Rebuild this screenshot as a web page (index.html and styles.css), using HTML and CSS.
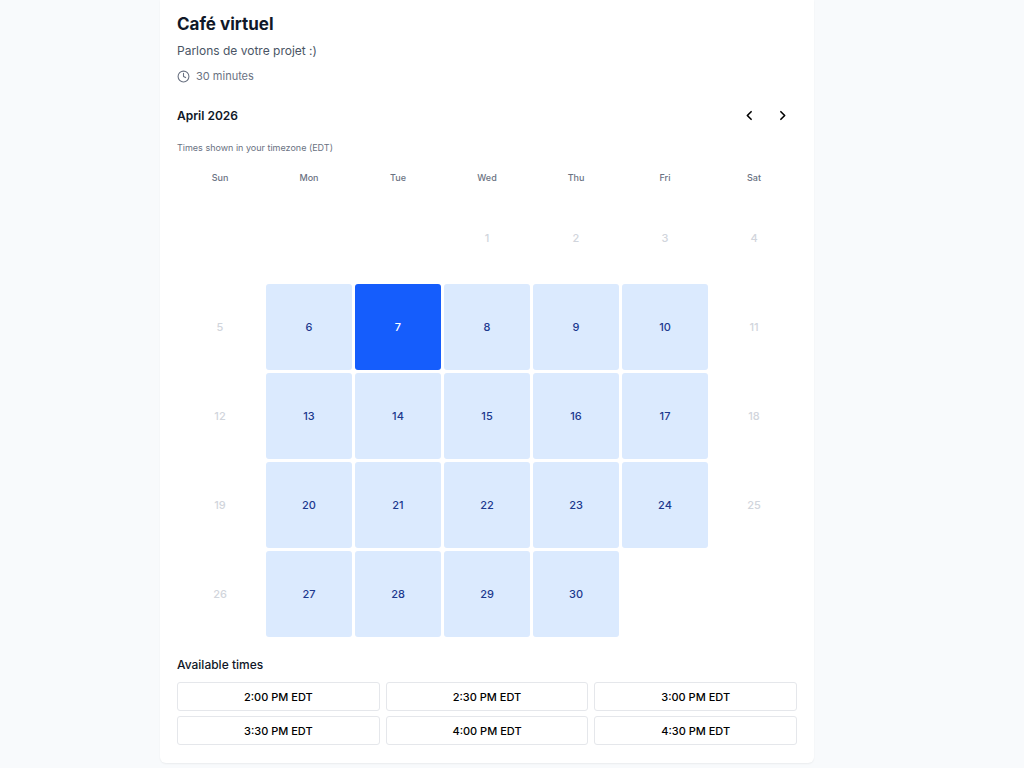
FILE: index.html
```html
<!DOCTYPE html>
<html lang="fr">
<head>
<meta charset="utf-8">
<meta name="viewport" content="width=device-width, initial-scale=1">
<title>Café virtuel</title>
<link rel="stylesheet" href="styles.css">
</head>
<body>
<main class="card">
  <header>
    <h1 class="title">Café virtuel</h1>
    <p class="subtitle">Parlons de votre projet :)</p>
    <p class="duration">
      <svg class="clock" viewBox="0 0 24 24" aria-hidden="true"><circle cx="12" cy="12" r="10"/><path d="M12 6v6l4 2"/></svg>
      <span>30 minutes</span>
    </p>
  </header>
  <div class="month-bar">
    <h2 class="heading">April 2026</h2>
    <div class="month-nav">
      <button class="nav-button" type="button" aria-label="Previous month"><svg class="chevron" viewBox="0 0 24 24"><path d="M15 19l-7-7 7-7"/></svg></button>
      <button class="nav-button" type="button" aria-label="Next month"><svg class="chevron" viewBox="0 0 24 24"><path d="M9 5l7 7-7 7"/></svg></button>
    </div>
  </div>
  <p class="timezone">Times shown in your timezone (EDT)</p>
  <div class="weekdays"><span>Sun</span><span>Mon</span><span>Tue</span><span>Wed</span><span>Thu</span><span>Fri</span><span>Sat</span></div>
  <div class="days">
    <button class="day first" disabled>1</button><button class="day" disabled>2</button><button class="day" disabled>3</button><button class="day" disabled>4</button>
    <button class="day" disabled>5</button><button class="day">6</button><button class="day selected" aria-pressed="true">7</button><button class="day">8</button><button class="day">9</button><button class="day">10</button><button class="day" disabled>11</button>
    <button class="day" disabled>12</button><button class="day">13</button><button class="day">14</button><button class="day">15</button><button class="day">16</button><button class="day">17</button><button class="day" disabled>18</button>
    <button class="day" disabled>19</button><button class="day">20</button><button class="day">21</button><button class="day">22</button><button class="day">23</button><button class="day">24</button><button class="day" disabled>25</button>
    <button class="day" disabled>26</button><button class="day">27</button><button class="day">28</button><button class="day">29</button><button class="day">30</button>
  </div>
  <section class="times">
    <h2 class="heading times-heading">Available times</h2>
    <div class="slots">
      <button class="slot">2:00 PM EDT</button><button class="slot">2:30 PM EDT</button><button class="slot">3:00 PM EDT</button>
      <button class="slot">3:30 PM EDT</button><button class="slot">4:00 PM EDT</button><button class="slot">4:30 PM EDT</button>
    </div>
  </section>
</main>
</body>
</html>
```
FILE: styles.css
```css
* { box-sizing: border-box; margin: 0; }
body {
  padding: 0 210px 4px 160px;
  background: #f8fafc;
  color: #101828;
  font-family: Inter, "Liberation Sans", sans-serif;
}
button { padding: 0; border: 0; background: none; color: inherit; font: inherit; cursor: pointer; }
.card {
  padding: 10px 17px 18px;
  background: #fff;
  border-radius: 0 0 6px 6px;
  box-shadow: 0 1px 2px rgba(0, 0, 0, 0.06);
}
.title { font-size: 17px; line-height: 28px; font-weight: 700; }
.subtitle { margin-top: 2px; font-size: 12px; line-height: 22px; color: #4a5565; }
.duration { display: flex; align-items: center; gap: 6px; margin-top: 4px; font-size: 11px; line-height: 20px; color: #6a7282; }
.clock { width: 13px; height: 13px; fill: none; stroke: currentColor; stroke-width: 2; stroke-linecap: round; stroke-linejoin: round; }
.month-bar { display: flex; align-items: center; justify-content: space-between; margin-top: 16px; padding-right: 1px; }
.heading { font-size: 12px; line-height: 20px; font-weight: 600; }
.times-heading { font-weight: 500; }
.month-nav { display: flex; gap: 6px; }
.nav-button { display: grid; place-items: center; width: 27px; height: 27px; color: #000; }
.chevron { width: 13px; height: 13px; fill: none; stroke: currentColor; stroke-width: 3; stroke-linecap: round; stroke-linejoin: round; }
.timezone { margin-top: 11px; font-size: 9px; line-height: 16px; color: #6a7282; }
.weekdays, .days { display: grid; grid-template-columns: repeat(7, 1fr); gap: 3px; }
.weekdays { margin-top: 14px; font-size: 9px; line-height: 16px; font-weight: 500; color: #6a7282; text-align: center; }
.days { margin-top: 9px; }
.day { aspect-ratio: 1; border-radius: 3px; background: #dbeafe; color: #1c398e; font-size: 11px; font-weight: 500; }
.day.first { grid-column-start: 4; }
.day:disabled { background: none; color: #d1d5dc; cursor: default; }
.day.selected { background: #155dfc; color: #fff; }
.times { margin-top: 18px; }
.slots { display: grid; grid-template-columns: repeat(3, 1fr); gap: 5px 6px; margin-top: 7px; }
.slot { height: 29px; border: 1px solid #e5e7eb; border-radius: 3px; color: #000; font-size: 11px; font-weight: 500; }
```
